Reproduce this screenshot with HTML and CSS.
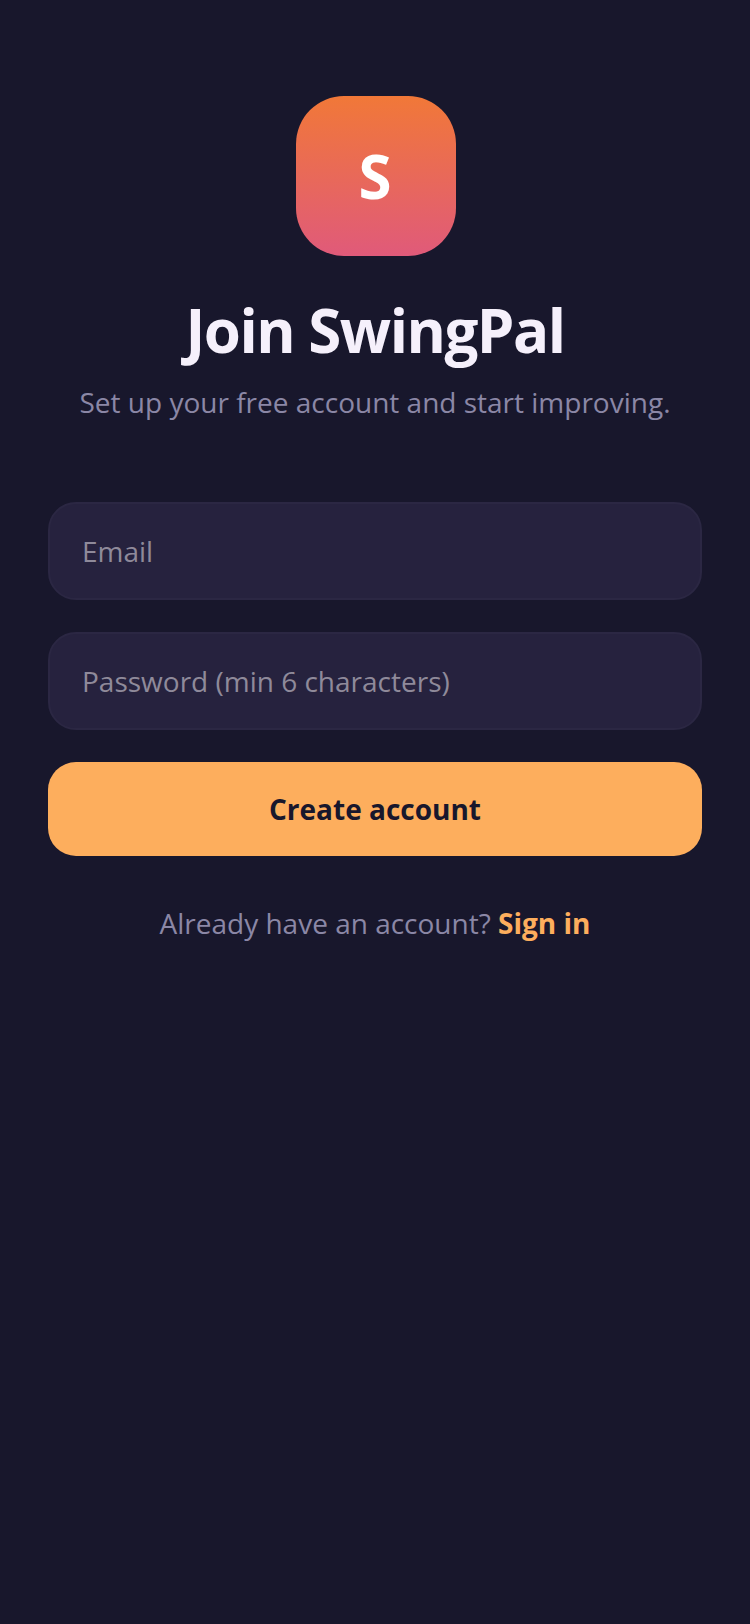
FILE: index.html
```html
<!DOCTYPE html>
<html lang="en">
<head>
<meta charset="utf-8">
<title>Join SwingPal</title>
<link rel="stylesheet" href="styles.css">
</head>
<body>
<main class="screen">
  <div class="logo">S</div>
  <h1 class="title">Join SwingPal</h1>
  <p class="subtitle">Set up your free account and start improving.</p>
  <form class="form">
    <input class="field" type="email" placeholder="Email">
    <input class="field" type="password" placeholder="Password (min 6 characters)">
    <button class="submit" type="button">Create account</button>
  </form>
  <p class="switch">Already have an account? <a class="link">Sign in</a></p>
</main>
</body>
</html>
```
FILE: styles.css
```css
* { box-sizing: border-box; }
html, body { margin: 0; height: 100%; }
body { background: #18172c; font-family: "Open Sans", sans-serif; }
.screen { display: flex; flex-direction: column; align-items: center; padding: 96px 48px 0; min-height: 1624px; }
.logo { width: 160px; height: 160px; margin-left: 2px; padding-right: 2px; border-radius: 48px; background: linear-gradient(180deg, #f17838, #e05a7a); color: #fff; font-size: 60px; font-weight: 700; display: flex; align-items: center; justify-content: center; }
.title { margin: 38px 0 0; font-size: 60px; line-height: 72px; font-weight: 700; color: #f5f0fb; letter-spacing: -1.5px; }
.subtitle { margin: 16px 0 0; font-size: 28px; line-height: 40px; color: #8b87a6; }
.form { width: 100%; margin-top: 80px; display: flex; flex-direction: column; gap: 32px; }
.field { width: 100%; height: 98px; border-radius: 28px; border: 2px solid #2b2743; background: #26223e; padding: 0 32px; font: 28px "Open Sans", sans-serif; color: #f5f0fb; outline: none; }
.field::placeholder { color: #8f8a9a; opacity: 1; }
.submit { width: 100%; height: 94px; border: 0; border-radius: 28px; background: #fdae5d; color: #18172c; font: 700 28px "Open Sans", sans-serif; }
.switch { margin: 47px 0 0; font-size: 28px; line-height: 40px; color: #8b87a6; }
.link { color: #fdae5d; font-weight: 700; }
```
